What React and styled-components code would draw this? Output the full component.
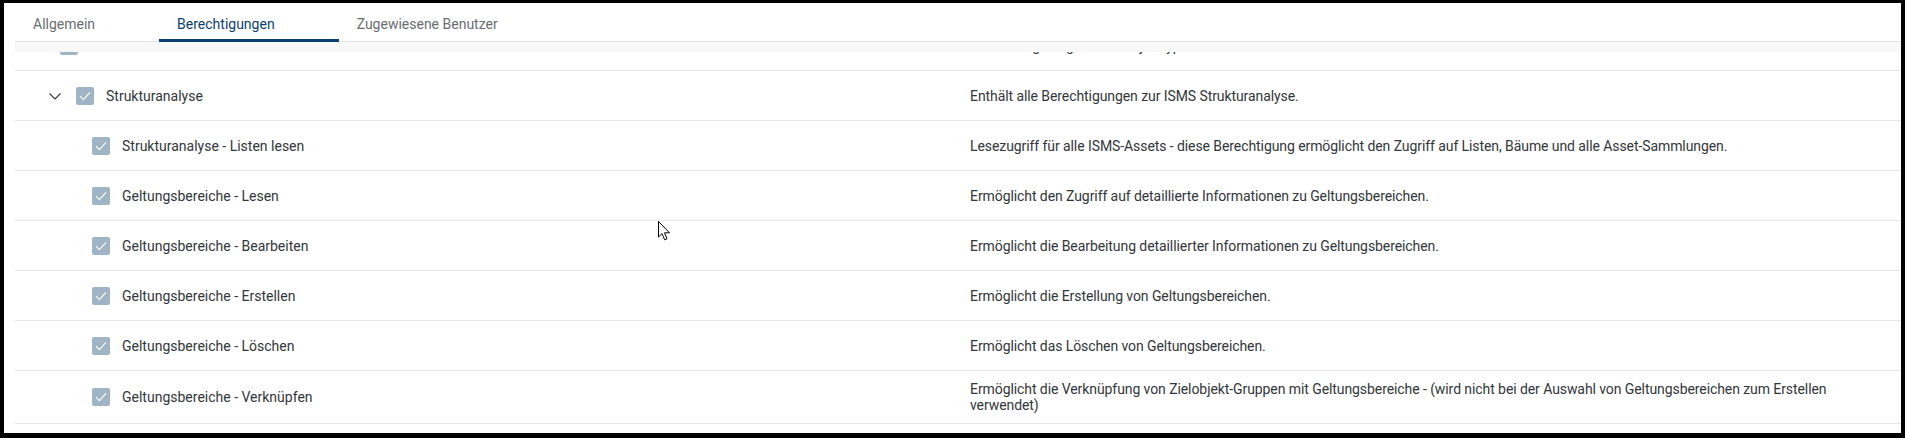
import React from 'react';
import styled, { createGlobalStyle } from 'styled-components';

const GlobalStyle = createGlobalStyle`
  html, body {
    margin: 0;
    padding: 0;
    background: #000;
  }
  body {
    font-family: Roboto, "Liberation Sans", Arial, sans-serif;
    font-size: 14px;
    color: #32363a;
  }
`;

const tabs = [
  { label: 'Allgemein' },
  { label: 'Berechtigungen', active: true },
  { label: 'Zugewiesene Benutzer' },
];

const rows = [
  { name: 'Assetklassen - Lesen', desc: 'Enthält Regelungen zum Objekttyp.', type: 'leaf' },
  { name: 'Strukturanalyse', desc: 'Enthält alle Berechtigungen zur ISMS Strukturanalyse.', type: 'parent' },
  { name: 'Strukturanalyse - Listen lesen', desc: 'Lesezugriff für alle ISMS-Assets - diese Berechtigung ermöglicht den Zugriff auf Listen, Bäume und alle Asset-Sammlungen.', type: 'child' },
  { name: 'Geltungsbereiche - Lesen', desc: 'Ermöglicht den Zugriff auf detaillierte Informationen zu Geltungsbereichen.', type: 'child' },
  { name: 'Geltungsbereiche - Bearbeiten', desc: 'Ermöglicht die Bearbeitung detaillierter Informationen zu Geltungsbereichen.', type: 'child' },
  { name: 'Geltungsbereiche - Erstellen', desc: 'Ermöglicht die Erstellung von Geltungsbereichen.', type: 'child' },
  { name: 'Geltungsbereiche - Löschen', desc: 'Ermöglicht das Löschen von Geltungsbereichen.', type: 'child' },
  { name: 'Geltungsbereiche - Verknüpfen', desc: 'Ermöglicht die Verknüpfung von Zielobjekt-Gruppen mit Geltungsbereiche - (wird nicht bei der Auswahl von Geltungsbereichen zum Erstellen verwendet)', type: 'child' },
];

// left offset of the checkbox per tree level
const indent = { leaf: 45, parent: 34, child: 77 };

const App = () => {
  return (
    <>
      <GlobalStyle />
      <Frame>
        <TabBar>
          {tabs.map(tab => (
            <Tab key={tab.label} $active={tab.active}>{tab.label}</Tab>
          ))}
        </TabBar>
        <Scroller>
          <StickyBand />
          <RowList>
            {rows.map(row => (
              <Row key={row.name}>
                <NameCell $indent={indent[row.type]}>
                  {row.type === 'parent' && (
                    <Toggle>
                      <svg width="12" height="7" viewBox="0 0 12 7">
                        <polyline points="0.5,0.5 6,6 11.5,0.5" fill="none" stroke="#32363a" strokeWidth="1.1" />
                      </svg>
                    </Toggle>
                  )}
                  <CheckBox>
                    <svg width="12" height="10" viewBox="0 0 12 10">
                      <polyline points="1,5.2 4.4,8.6 11,1.4" fill="none" stroke="#fff" strokeWidth="1.1" />
                    </svg>
                  </CheckBox>
                  <Label>{row.name}</Label>
                </NameCell>
                <DescCell>{row.desc}</DescCell>
              </Row>
            ))}
          </RowList>
        </Scroller>
        <Cursor>
          <svg width="13" height="20" viewBox="0 0 13 20">
            <path d="M0.5,0.5 L0.5,16 L4,12.6 L6.6,18.8 L9,17.8 L6.5,11.8 L11.5,11.8 Z" fill="#fff" stroke="#000" strokeWidth="1" strokeLinejoin="miter" />
          </svg>
        </Cursor>
      </Frame>
    </>
  );
}

export default App;

const Frame = styled.div`
  position: relative;
  margin: 3px 4px 0 4px;
  height: 430px;
  background: #fff;
  padding-left: 11px;
  display: flex;
  flex-direction: column;
  overflow: hidden;
`;

const TabBar = styled.div`
  display: flex;
  height: 39px;
  box-sizing: border-box;
  border-bottom: 1px solid #e5e5e5;
  flex-shrink: 0;
`;

const Tab = styled.div`
  display: flex;
  align-items: center;
  box-sizing: border-box;
  padding: 5px 64px 0 18px;
  font-size: 14px;
  color: ${p => (p.$active ? '#0b3e6f' : '#6a6d70')};
  border-bottom: 3px solid ${p => (p.$active ? '#0b3e6f' : 'transparent')};
  margin-bottom: -1px;
  white-space: nowrap;
`;

const Scroller = styled.div`
  position: relative;
  flex: 1;
  overflow: hidden;
`;

const StickyBand = styled.div`
  position: sticky;
  top: 0;
  height: 10px;
  background: #f8f8f8;
  z-index: 1;
`;

const RowList = styled.div`
  margin-top: -31px;
`;

const Row = styled.div`
  display: grid;
  grid-template-columns: 940px 1fr;
  align-items: center;
  box-sizing: border-box;
  min-height: 50px;
  padding: 10px 0 10px;
  border-bottom: 1px solid #e5e5e5;
  line-height: 16px;
`;

const NameCell = styled.div`
  display: flex;
  align-items: center;
  padding-left: ${p => p.$indent}px;
`;

const Toggle = styled.span`
  display: flex;
  align-items: center;
  width: 27px;
  height: 18px;
  padding-top: 1px;
  box-sizing: border-box;
`;

const CheckBox = styled.span`
  display: flex;
  align-items: center;
  justify-content: center;
  width: 18px;
  height: 18px;
  border-radius: 2px;
  background: #9fb4c4;
  flex-shrink: 0;
`;

const Label = styled.span`
  margin-left: 12px;
  white-space: nowrap;
`;

const DescCell = styled.div`
  padding: 0 40px 0 15px;
  letter-spacing: -0.08px;
`;

const Cursor = styled.div`
  position: absolute;
  left: 654px;
  top: 218px;
  z-index: 2;
  line-height: 0;
`;
